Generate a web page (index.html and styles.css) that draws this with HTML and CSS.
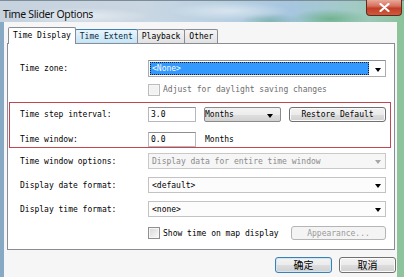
FILE: index.html
```html
<!DOCTYPE html>
<html>
<head>
<meta charset="utf-8">
<link rel="stylesheet" href="styles.css">
</head>
<body>
<div class="window">
  <div class="titlebar">
    <span class="title">Time Slider Options</span>
    <div class="close">
      <svg width="11" height="9" viewBox="0 0 11 9"><path d="M1.5 1 L9.5 8 M9.5 1 L1.5 8" stroke="#fff" stroke-width="2.2" stroke-linecap="round"/></svg>
    </div>
  </div>
  <div class="frame">
    <div class="client">
      <div class="tabs">
        <div class="tab tab-active">Time Display</div>
        <div class="tab tab-hot">Time Extent</div>
        <div class="tab">Playback</div>
        <div class="tab">Other</div>
      </div>
      <div class="panel">
        <div class="row r-zone">
          <div class="lbl">Time zone:</div>
          <div class="combo"><span class="sel-value">&lt;None&gt;</span></div>
        </div>
        <div class="row r-dst">
          <div class="lbl"></div>
          <span class="check check-disabled"></span>
          <span class="check-text muted">Adjust for daylight saving changes</span>
        </div>
        <div class="row r-step">
          <div class="lbl">Time step interval:</div>
          <div class="input">3.0</div>
          <div class="dropbtn">Months</div>
          <div class="btn btn-restore">Restore Default</div>
        </div>
        <div class="row r-window">
          <div class="lbl">Time window:</div>
          <div class="input">0.0</div>
          <span class="unit">Months</span>
        </div>
        <div class="row r-options">
          <div class="lbl">Time window options:</div>
          <div class="combo combo-disabled"><span class="plain">Display data for entire time window</span></div>
        </div>
        <div class="row r-date">
          <div class="lbl">Display date format:</div>
          <div class="combo combo-light"><span class="plain">&lt;default&gt;</span></div>
        </div>
        <div class="row r-time">
          <div class="lbl">Display time format:</div>
          <div class="combo combo-light"><span class="plain">&lt;none&gt;</span></div>
        </div>
        <div class="row r-show">
          <div class="lbl"></div>
          <span class="check"></span>
          <span class="check-text">Show time on map display</span>
          <div class="btn btn-disabled btn-appear">Appearance...</div>
        </div>
        <div class="highlight"></div>
      </div>
      <div class="actions">
        <div class="btn btn-cjk btn-focus">确定</div>
        <div class="btn btn-cjk">取消</div>
      </div>
    </div>
  </div>
</div>
</body>
</html>
```
FILE: styles.css
```css
* { box-sizing: border-box; margin: 0; padding: 0; }
html, body { width: 404px; height: 277px; overflow: hidden; }
body {
  font-family: "DejaVu Sans Mono", "Liberation Mono", monospace;
  font-size: 8px;
  color: #000;
  background: #fff;
}
.window {
  width: 404px;
  height: 277px;
  display: flex;
  flex-direction: column;
}
.titlebar {
  height: 22px;
  flex: none;
  display: flex;
  justify-content: space-between;
  align-items: flex-start;
  padding-left: 3px;
  border-top: 1px solid #7d8c99;
  background:
    radial-gradient(ellipse 70px 8px at 80px 15px, rgba(255,255,255,0.55), transparent),
    radial-gradient(ellipse 60px 9px at 230px 10px, rgba(255,255,255,0.45), transparent),
    radial-gradient(ellipse 40px 10px at 330px 18px, rgba(70,160,90,0.55), transparent),
    radial-gradient(ellipse 30px 8px at 270px 20px, rgba(70,150,110,0.4), transparent),
    linear-gradient(to right, #c6d3df 0%, #cad7e3 35%, #b9d0e2 55%, #a6c6df 72%, #a2cbc4 88%, #8cc29a 100%);
}
.title {
  font-family: "Noto Sans", "Open Sans", sans-serif;
  font-size: 10.5px;
  letter-spacing: -0.35px;
  line-height: 12px;
  margin-top: 7px;
  color: #111;
}
.close {
  width: 36px;
  height: 16px;
  margin-top: -1px;
  margin-right: 2px;
  border: 1px solid #5e2a22;
  border-top: none;
  border-radius: 0 0 4px 4px;
  background: linear-gradient(#e9a898 0%, #d77260 40%, #c23e26 55%, #cf5a3e 100%);
  display: flex;
  align-items: center;
  justify-content: center;
}
.frame {
  flex: 1;
  display: flex;
  border-left: 4px solid #88a9c4;
  border-right: 7px solid #8ec39b;
}
.client {
  flex: 1;
  background: #f6f6f6;
  display: flex;
  flex-direction: column;
}
.tabs {
  display: flex;
  align-items: flex-end;
  height: 16px;
  margin: 5px 0 0 4px;
  position: relative;
  z-index: 1;
}
.tab {
  height: 14px;
  padding: 0 4px;
  margin-left: -1px;
  border: 1px solid #898c95;
  border-bottom: none;
  border-radius: 2px 2px 0 0;
  background: linear-gradient(#f4f4f4, #e2e2e2);
  line-height: 13px;
  white-space: nowrap;
}
.tab-active {
  height: 17px;
  margin-left: 0;
  margin-bottom: -1px;
  background: #fff;
  line-height: 15px;
  position: relative;
  z-index: 2;
}
.tab-hot {
  background: linear-gradient(#e9f5fc, #c3e4f6);
  border-color: #3c7fb1;
  color: #0c2a40;
}
.panel {
  position: relative;
  height: 207px;
  margin: 0 2px 0 3px;
  border: 1px solid #898c95;
  background: #fff;
  padding: 0 8px 0 12px;
  display: flex;
  flex-direction: column;
}
.row {
  display: flex;
  align-items: center;
  flex: none;
}
.lbl {
  width: 128px;
  flex: none;
  white-space: nowrap;
}
.r-zone { height: 17px; margin-top: 16px; }
.r-dst { height: 13px; margin-top: 6px; }
.r-step { height: 15px; margin-top: 11px; }
.r-window { height: 15px; margin-top: 10px; }
.r-options { height: 16px; margin-top: 6px; }
.r-date { height: 16px; margin-top: 8px; }
.r-time { height: 16px; margin-top: 8px; }
.r-show { height: 14px; margin-top: 9px; }

.combo {
  position: relative;
  flex: 1;
  height: 100%;
  border: 1px solid #abadb3;
  border-top-color: #8e9096;
  background: #fff;
  padding: 1px 16px 1px 1px;
  display: flex;
  align-items: center;
}
.combo::after {
  content: "";
  position: absolute;
  right: 4px;
  top: 50%;
  margin-top: -1px;
  border-left: 3px solid transparent;
  border-right: 3px solid transparent;
  border-top: 4px solid #000;
}
.sel-value {
  flex: 1;
  height: 100%;
  background: #3399ff;
  color: #fff;
  padding-left: 2px;
  outline: 1px dotted #1a1a1a;
  outline-offset: -1px;
  display: flex;
  align-items: center;
}
.plain { padding-left: 2px; white-space: nowrap; }
.combo-disabled {
  background: #f6f6f6;
  border-color: #c9c9c9;
  color: #8a8a8a;
}
.combo-disabled::after { border-top-color: #a6a6a6; }
.combo-light {
  background: #fcfcfc;
  border-color: #c3c3c3;
}
.check {
  width: 12px;
  height: 12px;
  flex: none;
  border: 1px solid #8e8f8f;
  background: linear-gradient(135deg, #d6d6d6, #fbfbfb);
  box-shadow: inset 0 0 0 1px #f6f6f6;
}
.check-disabled {
  border-color: #bcbcbc;
  background: #f2f2f2;
}
.check-text {
  margin-left: 3px;
  white-space: nowrap;
}
.muted { color: #6d6d6d; }
.input {
  width: 48px;
  height: 100%;
  flex: none;
  border: 1px solid #b5b8bf;
  border-top-color: #8e9096;
  background: #fff;
  padding-left: 2px;
  display: flex;
  align-items: center;
}
.dropbtn {
  position: relative;
  width: 77px;
  height: 100%;
  flex: none;
  margin-left: 8px;
  border: 1px solid #8a8a8a;
  border-radius: 2px;
  background: linear-gradient(#f4f4f4 0%, #ececec 50%, #dfdfdf 51%, #d2d2d2 100%);
  display: flex;
  align-items: center;
  padding-left: 0;
}
.dropbtn::after {
  content: "";
  position: absolute;
  right: 7px;
  top: 50%;
  margin-top: -1px;
  border-left: 3px solid transparent;
  border-right: 3px solid transparent;
  border-top: 4px solid #000;
}
.btn {
  height: 100%;
  border: 1px solid #707070;
  border-radius: 3px;
  background: linear-gradient(#f3f3f3 0%, #ebebeb 50%, #dddddd 51%, #d0d0d0 100%);
  box-shadow: inset 0 0 0 1px #fbfbfb;
  display: flex;
  align-items: center;
  justify-content: center;
  white-space: nowrap;
}
.btn-restore { width: 97px; margin-left: 8px; flex: none; }
.btn-appear { width: 95px; margin-left: auto; flex: none; }
.btn-disabled {
  border-color: #b5b5b5;
  background: #f4f4f4;
  box-shadow: none;
  color: #9a9a9a;
}
.unit { margin-left: 9px; }
.highlight {
  position: absolute;
  left: 1px;
  top: 58px;
  width: 382px;
  height: 46px;
  border: 1px solid #c4464f;
  pointer-events: none;
}
.actions {
  display: flex;
  justify-content: flex-end;
  gap: 7px;
  margin-top: 7px;
  padding-right: 1px;
  height: 16px;
}
.btn-cjk {
  width: 57px;
  font-family: "Noto Sans CJK SC", sans-serif;
  font-size: 10px;
  line-height: 1;
}
.btn-focus {
  border-color: #3c7fb1;
  box-shadow: inset 0 0 0 1px #cfe8f8;
}
```
